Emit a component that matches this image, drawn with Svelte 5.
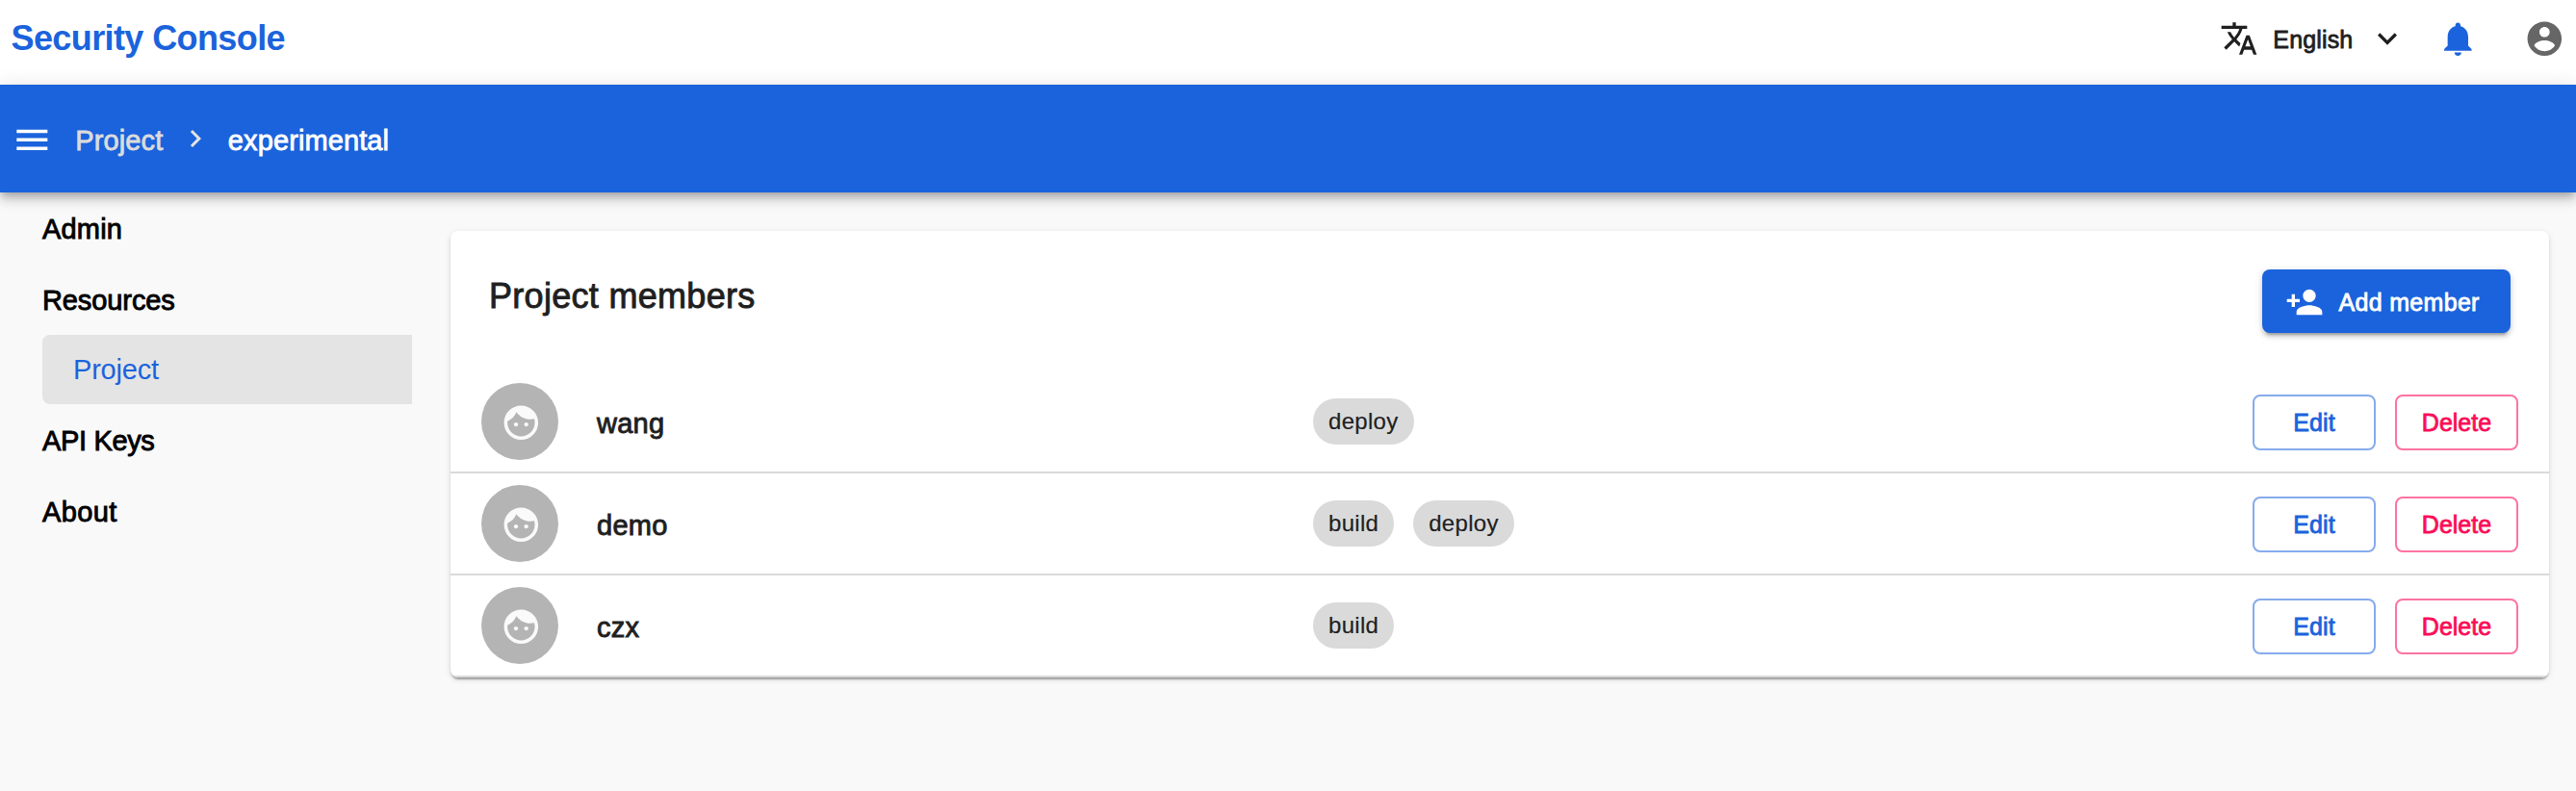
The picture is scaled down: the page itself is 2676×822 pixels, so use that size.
<script>
  const icons = {
    menu: 'M3 18h18v-2H3v2zm0-5h18v-2H3v2zm0-7v2h18V6H3z',
    next: 'M10 6L8.59 7.41 13.17 12l-4.58 4.59L10 18l6-6z',
    more: 'M16.59 8.59L12 13.17 7.41 8.59 6 10l6 6 6-6z',
    translate:
      'M12.87 15.07l-2.54-2.51.03-.03c1.74-1.94 2.98-4.17 3.71-6.53H17V4h-7V2H8v2H1v1.99h11.17C11.5 7.92 10.44 9.75 9 11.35 8.07 10.32 7.3 9.19 6.69 8h-2c.73 1.63 1.73 3.17 2.98 4.56l-5.09 5.02L4 19l5-5 3.11 3.11.76-2.04zM18.5 10h-2L12 22h2l1.12-3h4.75L21 22h2l-4.5-12zm-2.62 7l1.62-4.33L19.12 17h-3.24z',
    bell: 'M12 22c1.1 0 2-.9 2-2h-4c0 1.1.89 2 2 2zm6-6v-5c0-3.07-1.64-5.64-4.5-6.32V4c0-.83-.67-1.5-1.5-1.5s-1.5.67-1.5 1.5v.68C7.63 5.36 6 7.92 6 11v5l-2 2v1h16v-1l-2-2z',
    account:
      'M12 2C6.48 2 2 6.48 2 12s4.48 10 10 10 10-4.48 10-10S17.52 2 12 2zm0 3c1.66 0 3 1.34 3 3s-1.34 3-3 3-3-1.34-3-3 1.34-3 3-3zm0 14.2c-2.5 0-4.71-1.28-6-3.22.03-1.99 4-3.08 6-3.08 1.99 0 5.97 1.09 6 3.08-1.29 1.94-3.5 3.22-6 3.22z',
    personAdd:
      'M15 12c2.21 0 4-1.79 4-4s-1.79-4-4-4-4 1.79-4 4 1.79 4 4 4zm-9-2V7H4v3H1v2h3v3h2v-3h3v-2H6zm9 4c-2.67 0-8 1.34-8 4v2h16v-2c0-2.66-5.33-4-8-4z',
    face: 'M9 11.75c-.69 0-1.25.56-1.25 1.25s.56 1.25 1.25 1.25 1.25-.56 1.25-1.25-.56-1.25-1.25-1.25zm6 0c-.69 0-1.25.56-1.25 1.25s.56 1.25 1.25 1.25 1.25-.56 1.25-1.25-.56-1.25-1.25-1.25zM12 2C6.48 2 2 6.48 2 12s4.48 10 10 10 10-4.48 10-10S17.52 2 12 2zm0 18c-4.41 0-8-3.59-8-8 0-.29.02-.58.05-.86 2.36-1.05 4.23-2.98 5.21-5.37C11.07 8.33 14.05 10 17.42 10c.78 0 1.53-.09 2.25-.26.21.71.33 1.47.33 2.26 0 4.41-3.59 8-8 8z'
  };

  const nav = [
    { label: 'Admin', tracking: 0.2 },
    { label: 'Resources', tracking: -0.1 },
    { label: 'Project', tracking: -0.2, child: true },
    { label: 'API Keys', tracking: -0.35 },
    { label: 'About', tracking: 0.35 }
  ];

  const members = [
    { name: 'wang', roles: ['deploy'] },
    { name: 'demo', roles: ['build', 'deploy'] },
    { name: 'czx', roles: ['build'] }
  ];
</script>

{#snippet icon(name)}
  <svg class="icon {name}" viewBox="0 0 24 24" aria-hidden="true"><path d={icons[name]} /></svg>
{/snippet}

<div class="page">
  <header class="top">
    <h1>Security Console</h1>
    <div class="tools">
      <button class="language">
        {@render icon('translate')}
        <span>English</span>
        {@render icon('more')}
      </button>
      {@render icon('bell')}
      {@render icon('account')}
    </div>
  </header>

  <div class="bar">
    {@render icon('menu')}
    <a class="crumb" href="#project">Project</a>
    {@render icon('next')}
    <span class="crumb current">experimental</span>
  </div>

  <div class="body">
    <nav>
      {#each nav as item}
        <a href="#nav" class:child={item.child} style="letter-spacing: {item.tracking}px">{item.label}</a>
      {/each}
    </nav>

    <main>
      <div class="card-head">
        <h2>Project members</h2>
        <button class="add">{@render icon('personAdd')}<span>Add member</span></button>
      </div>
      {#each members as member}
        <div class="row">
          <div class="avatar">{@render icon('face')}</div>
          <div class="name">{member.name}</div>
          <div class="roles">
            {#each member.roles as role}<span class="chip">{role}</span>{/each}
          </div>
          <div class="actions">
            <button class="edit">Edit</button>
            <button class="delete">Delete</button>
          </div>
        </div>
      {/each}
    </main>
  </div>
</div>

<style>
  :global(body) {
    background: #f9f9f9;
  }
  .page {
    display: flex;
    flex-direction: column;
    height: 822px;
    overflow: hidden;
    background: #f9f9f9;
    color: #1f1f1f;
    font-family: 'Liberation Sans', Arial, sans-serif;
  }
  h1,
  h2 {
    margin: 0;
    font-size: 36px;
    line-height: 44px;
  }
  button {
    box-sizing: border-box;
    margin: 0;
    padding: 0;
    border: 0;
    background: none;
    color: inherit;
    font: 25px/44px 'Liberation Sans', Arial, sans-serif;
    -webkit-text-stroke: 0.8px currentColor;
  }
  a {
    text-decoration: none;
  }
  .icon {
    display: block;
    flex: none;
    width: 42.67px;
    height: 42.67px;
    fill: currentColor;
    -webkit-text-stroke: 0;
  }
  .translate,
  .more,
  .personAdd {
    width: 40px;
    height: 40px;
  }

  .top {
    box-sizing: border-box;
    display: flex;
    justify-content: space-between;
    align-items: flex-start;
    height: 88px;
    padding: 18px 11.7px 0 11.5px;
    background: #fff;
  }
  h1 {
    color: #1b63dc;
    letter-spacing: -0.6px;
  }
  .tools {
    display: flex;
    align-items: center;
    padding-top: 1.3px;
  }
  .language {
    display: flex;
    align-items: center;
    height: 42px;
    padding-bottom: 1px;
    margin-right: 31.7px;
    letter-spacing: 0.15px;
  }
  .language span {
    width: 84px;
    margin: 2px 14.7px 0 15.7px;
    text-align: left;
  }
  .bell {
    margin-right: 47.3px;
    color: #1b63dc;
  }
  .account {
    color: #666;
  }

  .bar {
    box-sizing: border-box;
    position: relative;
    flex: none;
    display: flex;
    align-items: center;
    height: 112px;
    padding: 2px 0 0 11.7px;
    background: #1b63dc;
    color: #fff;
    box-shadow:
      0 4px 8px -2px rgba(0, 0, 0, 0.2),
      0 8px 10px 0 rgba(0, 0, 0, 0.14),
      0 2px 20px 0 rgba(0, 0, 0, 0.12);
  }
  .crumb {
    font-size: 29px;
    line-height: 40px;
    letter-spacing: 0.1px;
    color: #dcdcdc;
    padding-top: 2px;
    -webkit-text-stroke: 0.8px currentColor;
  }
  a.crumb {
    width: 92px;
    margin: 0 15px 0 24px;
  }
  .current {
    margin-left: 15.5px;
    color: #fff;
  }
  .next {
    width: 36px;
    height: 36px;
    margin-top: -2px;
    color: #e4e4e4;
  }

  .body {
    display: flex;
    align-items: flex-start;
    padding-right: 28px;
  }
  nav {
    flex: none;
    display: flex;
    flex-direction: column;
    width: 384px;
    padding: 1px 40px 0 44px;
  }
  nav a {
    height: 74px;
    font-size: 29px;
    line-height: 74px;
    color: #000;
    -webkit-text-stroke: 0.9px currentColor;
  }
  nav .child {
    height: 72px;
    margin: -1px 0 1px;
    padding-left: 32px;
    border-radius: 8px 0 0 8px;
    background: #e4e4e4;
    color: #1b63dc;
    line-height: 72px;
    -webkit-text-stroke: 0;
  }

  main {
    flex: 1;
    margin-top: 40px;
    border-radius: 8px;
    background: #fff;
    overflow: hidden;
    box-shadow:
      0 4px 2px -2px rgba(0, 0, 0, 0.2),
      0 2px 2px 0 rgba(0, 0, 0, 0.14),
      0 2px 6px 0 rgba(0, 0, 0, 0.12);
  }
  .card-head {
    box-sizing: border-box;
    display: flex;
    justify-content: space-between;
    align-items: flex-start;
    height: 146px;
    padding: 40px 40px 0 40px;
  }
  h2 {
    margin-top: 6px;
    font-weight: 400;
    letter-spacing: 0.3px;
    -webkit-text-stroke: 0.9px currentColor;
  }
  .add {
    display: flex;
    align-items: center;
    width: 258px;
    height: 66px;
    padding-left: 23.6px;
    border-radius: 8px;
    background: #1b63dc;
    color: #fff;
    letter-spacing: 0.3px;
    box-shadow:
      0 6px 2px -4px rgba(0, 0, 0, 0.2),
      0 4px 4px 0 rgba(0, 0, 0, 0.14),
      0 2px 10px 0 rgba(0, 0, 0, 0.12);
  }
  .personAdd {
    margin-top: 2px;
  }
  .add span {
    margin: 1px 0 0 16px;
    white-space: nowrap;
  }

  .row {
    box-sizing: border-box;
    display: flex;
    align-items: center;
    height: 106px;
    padding: 0 32px;
    border-bottom: 2px solid #dadada;
  }
  .avatar {
    display: flex;
    align-items: center;
    justify-content: center;
    width: 80px;
    height: 80px;
    border-radius: 50%;
    background: #b4b4b4;
    color: #fafafa;
  }
  .face {
    margin: 2px 0 0 2px;
  }
  .name {
    width: 744px;
    padding: 4px 0 0 40px;
    font-size: 29px;
    line-height: 40px;
    letter-spacing: 0.25px;
    -webkit-text-stroke: 0.9px currentColor;
  }
  .roles {
    flex: 1;
    display: flex;
    gap: 20px;
  }
  .chip {
    height: 48px;
    padding: 0 16px;
    border-radius: 24px;
    background: #dadada;
    font-size: 24px;
    line-height: 48px;
    letter-spacing: 0.3px;
    -webkit-text-stroke: 0.2px currentColor;
  }
  .actions {
    display: flex;
    gap: 20px;
    padding-top: 2px;
  }
  .actions button {
    width: 128px;
    height: 58px;
    border: 2px solid #86abec;
    border-radius: 8px;
    color: #1b63dc;
    letter-spacing: 0.1px;
  }
  .actions .delete {
    border-color: #fd73a0;
    color: #fb0d58;
    letter-spacing: 0;
  }
</style>
